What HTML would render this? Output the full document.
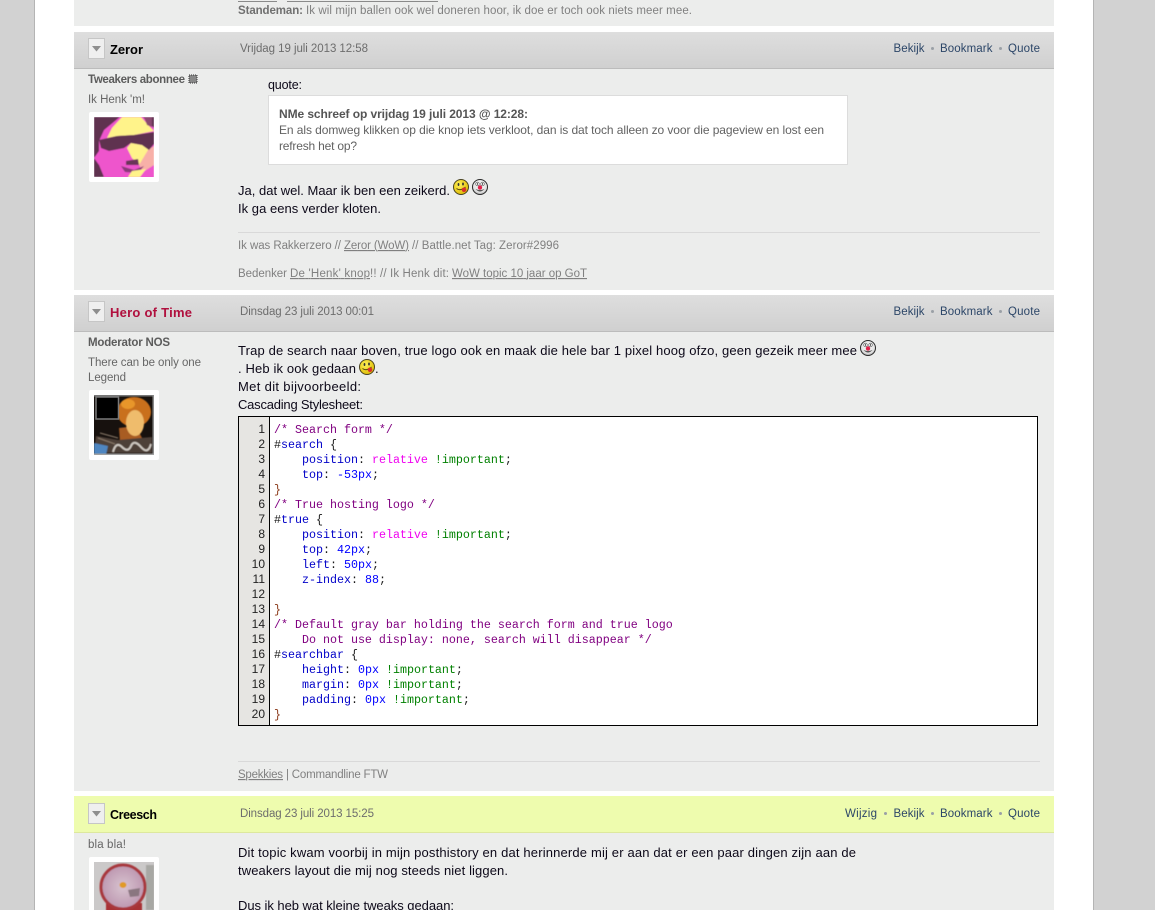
<!DOCTYPE html>
<html><head><meta charset="utf-8"><title>Forum</title>
<style>
html,body{margin:0;padding:0;width:1155px;height:910px;overflow:hidden;background:#d2d2d2}
svg{display:block;font-family:"Liberation Sans",sans-serif}
.b{font-size:13px;fill:#0c0818}
.g{font-size:11.5px;fill:#808080}
.m{font-size:11.5px;fill:#666}
.mb{font-size:11.5px;fill:#5c5c5c;font-weight:bold}
.d{font-size:11.5px;fill:#6d6d6d}
.l{font-size:11.5px;fill:#2c4668}
.n{font-size:13px;font-weight:bold;fill:#000}
.q{font-size:12px;fill:#626262}
.c{font-family:"Liberation Mono",monospace;font-size:11.67px;fill:#1a1a1a;white-space:pre}
.ln{font-size:12px;fill:#222;text-anchor:end}
.cm{fill:#800080}.p{fill:#0000c8}.v{fill:#f000f0}.i{fill:#008000}.u{fill:#0000ff}.k{fill:#8b3a1a}
</style></head><body>
<svg width="1155" height="910" viewBox="0 0 1155 910" xmlns="http://www.w3.org/2000/svg">
<defs>
<linearGradient id="h" x1="0" y1="0" x2="0" y2="1"><stop offset="0" stop-color="#dedede"/><stop offset="1" stop-color="#d0d0d0"/></linearGradient>
<radialGradient id="sy" cx=".4" cy=".35" r=".7"><stop offset="0" stop-color="#fff25a"/><stop offset="1" stop-color="#dcb800"/></radialGradient>
<radialGradient id="sc" cx=".5" cy=".4" r=".65"><stop offset="0" stop-color="#fff"/><stop offset=".7" stop-color="#e0e0e0"/><stop offset="1" stop-color="#8a8a8a"/></radialGradient>
<radialGradient id="cr" cx=".5" cy=".5" r=".5"><stop offset="0" stop-color="#d8c4d0"/><stop offset="1" stop-color="#bd97b0"/></radialGradient>
<filter id="bl" x="-5%" y="-5%" width="110%" height="110%"><feGaussianBlur stdDeviation=".5"/></filter>
<clipPath id="c1"><rect x="94" y="117" width="60" height="60"/></clipPath>
<clipPath id="c2"><rect x="94" y="395" width="60" height="60"/></clipPath>
<clipPath id="c3"><rect x="94" y="862" width="60" height="48"/></clipPath>
<g id="yel"><circle cx="8" cy="8" r="7.500" fill="url(#sy)" stroke="#4a4420"/><ellipse cx="5.500" cy="5.500" rx=".9" ry="1.500" fill="#333"/><ellipse cx="10" cy="5" rx=".9" ry="1.500" fill="#333"/><path d="M3.500 9.500Q7.500 12.500 12.500 8" fill="none" stroke="#5a4a10"/><circle cx="11" cy="10.800" r="2.300" fill="#d8322c"/></g>
<g id="clo"><circle cx="8" cy="8" r="7.500" fill="url(#sc)" stroke="#2a2a2a"/><path d="M3.500 10Q8 15 12.500 10Q8 12 3.500 10Z" fill="#555"/><circle cx="5.500" cy="5" r="1.800" fill="#fff" stroke="#555" stroke-width=".6"/><circle cx="10.500" cy="5" r="1.800" fill="#fff" stroke="#555" stroke-width=".6"/><circle cx="5.500" cy="5" r=".7" fill="#222"/><circle cx="10.500" cy="5" r=".7" fill="#222"/><circle cx="8" cy="8.500" r="2.200" fill="#e0204a"/></g>
<g id="tog"><rect x=".5" y=".5" width="16" height="20" fill="#efefef" stroke="#c6c6c6"/><path d="M4 8H13L8.500 13.500Z" fill="#8e8e8e"/></g>
</defs>

<rect width="1155" height="910" fill="#d2d2d2"/>
<rect x="34" width="1060" height="910" fill="#b4b4b4"/>
<rect x="35" width="1058" height="910" fill="#fff"/>

<!-- post 0 remainder -->
<rect x="74" y="0" width="980" height="26" fill="#ecedec"/>
<path d="M238 1.500H277M287 1.500H438" stroke="#8a8a8a"/>
<text x="238" y="14" class="g" style="font-weight:bold;fill:#707070" textLength="65">Standeman:</text>
<text x="306" y="14" class="g" textLength="386">Ik wil mijn ballen ook wel doneren hoor, ik doe er toch ook niets meer mee.</text>

<!-- Zeror -->
<rect x="74" y="32" width="980" height="36" fill="url(#h)"/>
<rect x="74" y="68" width="980" height="1" fill="#bcbcbc"/>
<rect x="74" y="69" width="980" height="221" fill="#ecedec"/>
<use href="#tog" x="88" y="38"/>
<text x="110" y="54" class="n" textLength="33">Zeror</text>
<text x="240" y="52" class="d" textLength="128">Vrijdag 19 juli 2013 12:58</text>
<text x="893.500" y="52" class="l" textLength="31">Bekijk</text>
<circle cx="932.500" cy="48.500" r="1.500" fill="#9aa0a6"/>
<text x="940" y="52" class="l" textLength="52.500">Bookmark</text>
<circle cx="1000.500" cy="48.500" r="1.500" fill="#9aa0a6"/>
<text x="1008" y="52" class="l" textLength="32">Quote</text>

<text x="88" y="83" class="mb" textLength="97">Tweakers abonnee</text>
<rect x="189" y="75" width="8" height="8" fill="#888" stroke="#333" stroke-width="1" stroke-dasharray="1 1"/>
<text x="88" y="103" class="m" textLength="57">Ik Henk 'm!</text>
<rect x="89" y="112" width="70" height="70" rx="2" fill="#fff"/>
<g clip-path="url(#c1)"><g filter="url(#bl)">
<rect x="94" y="117" width="60" height="60" fill="#5e3350"/>
<path d="M99 141L104 130 121 116 142 116 154 128V178H104L99 165 94 158 99 151Z" fill="#ee55cc"/>
<path d="M107 138L112 128 122 117 141 117 149 126 154 131 134 135 117 136Z" fill="#fff38a"/>
<path d="M144 117H152V127L147 125Z" fill="#8a4a70"/>
<path d="M131 143L142 145 149 150 144 161 139 165 132 158 127 148Z" fill="#fff38a"/>
<path d="M148 150L154 146V165L143 172 139 165Z" fill="#f8b0a8"/>
<path d="M99 140L117 136 134 135 154 132V144L149 150 142 145 131 143 124 148 109 151 101 148Z" fill="#5e3350"/>
<path d="M126 161L138 159 139 165 126 165Z" fill="#6a3558"/>
<path d="M121 166L134 170 144 166 138 173 125 172Z" fill="#8a3a78"/>
<path d="M132 171L146 169 140 177H128Z" fill="#fff38a"/>
<path d="M94 160L99 165 104 177H94Z" fill="#5e3350"/>
</g></g>

<text x="268" y="89" class="b" style="font-size:12.5px" textLength="34">quote:</text>
<rect x="268.500" y="95.500" width="579" height="69" fill="#fff" stroke="#dcdcdc"/>
<text x="279" y="118" class="q" style="font-weight:bold;fill:#555" textLength="249">NMe schreef op vrijdag 19 juli 2013 @ 12:28:</text>
<text x="279" y="134" class="q" textLength="545">En als domweg klikken op die knop iets verkloot, dan is dat toch alleen zo voor die pageview en lost een</text>
<text x="279" y="150" class="q" textLength="78">refresh het op?</text>
<text x="238" y="195" class="b" textLength="212">Ja, dat wel. Maar ik ben een zeikerd.</text>
<use href="#yel" x="453" y="179"/>
<use href="#clo" x="472" y="179"/>
<text x="238" y="213" class="b" textLength="143">Ik ga eens verder kloten.</text>
<rect x="238" y="232" width="802" height="1" fill="#d9d9d9"/>
<text x="238" y="249" class="g" textLength="103">Ik was Rakkerzero //</text>
<text x="344" y="249" class="g" text-decoration="underline" textLength="65">Zeror (WoW)</text>
<text x="412" y="249" class="g" textLength="147">// Battle.net Tag: Zeror#2996</text>
<text x="238" y="277" class="g" textLength="49">Bedenker</text>
<text x="290" y="277" class="g" text-decoration="underline" textLength="80">De 'Henk' knop</text>
<text x="370" y="277" class="g" textLength="79">!! // Ik Henk dit:</text>
<text x="452" y="277" class="g" text-decoration="underline" textLength="135">WoW topic 10 jaar op GoT</text>

<!-- Hero of Time -->
<rect x="74" y="295" width="980" height="36" fill="url(#h)"/>
<rect x="74" y="331" width="980" height="1" fill="#bcbcbc"/>
<rect x="74" y="332" width="980" height="459" fill="#ecedec"/>
<use href="#tog" x="88" y="301"/>
<text x="110" y="317" class="n" style="fill:#b0103e" textLength="82">Hero of Time</text>
<text x="240" y="315" class="d" textLength="134">Dinsdag 23 juli 2013 00:01</text>
<text x="893.500" y="315" class="l" textLength="31">Bekijk</text>
<circle cx="932.500" cy="311.500" r="1.500" fill="#9aa0a6"/>
<text x="940" y="315" class="l" textLength="52.500">Bookmark</text>
<circle cx="1000.500" cy="311.500" r="1.500" fill="#9aa0a6"/>
<text x="1008" y="315" class="l" textLength="32">Quote</text>

<text x="88" y="346" class="mb" textLength="82">Moderator NOS</text>
<text x="88" y="366" class="m" textLength="113">There can be only one</text>
<text x="88" y="381" class="m" textLength="38">Legend</text>
<rect x="89" y="390" width="70" height="70" rx="2" fill="#fff"/>
<g clip-path="url(#c2)">
<rect x="94" y="395" width="60" height="60" fill="#17110e"/>
<g filter="url(#bl)">
<ellipse cx="134" cy="412" rx="17" ry="15" fill="#c9701c"/>
<ellipse cx="128" cy="404" rx="7" ry="5" fill="#e8962c"/>
<path d="M119 428L136 426 142 438 120 442Z" fill="#a85c24"/>
<ellipse cx="135" cy="423" rx="9" ry="13" fill="#efbc6c"/>
<path d="M96 436L118 440 152 437V453H94Z" fill="#4e4038"/>
<path d="M94 443L108 446 106 455H94Z" fill="#4f86c0"/>
<path d="M100 433L118 438M98 438L115 444" stroke="#8a7a6a"/>
<path d="M113 452Q116 441 122 447T131 446 141 447 151 444" stroke="#cfc9c2" stroke-width="2" fill="none"/>
</g>
<rect x="94" y="395" width="60" height="1.500" fill="#777"/>
<rect x="152.500" y="395" width="1.500" height="60" fill="#8a8a8a"/>
<rect x="94" y="453.500" width="60" height="1.500" fill="#a0a0a0"/>
<rect x="96" y="397" width="22.500" height="22" fill="#000" stroke="#7a7a7a" stroke-width="1.500"/>
</g>

<text x="238" y="355" class="b" textLength="619">Trap de search naar boven, true logo ook en maak die hele bar 1 pixel hoog ofzo, geen gezeik meer mee</text>
<use href="#clo" x="860" y="340"/>
<text x="238" y="373" class="b" textLength="118">. Heb ik ook gedaan</text>
<use href="#yel" x="359" y="359"/>
<text x="375" y="373" class="b">.</text>
<text x="238" y="391" class="b" textLength="123">Met dit bijvoorbeeld:</text>
<text x="238" y="409" class="b" textLength="125">Cascading Stylesheet:</text>

<rect x="238.500" y="416.500" width="799" height="309" fill="#fff" stroke="#000"/>
<rect x="239" y="417" width="30" height="308" fill="#e6e5e2"/>
<rect x="269" y="417" width="1" height="308" fill="#000"/>
<g class="ln">
<text class="ln" x="265" y="433">1</text><text class="ln" x="265" y="448">2</text><text class="ln" x="265" y="463">3</text><text class="ln" x="265" y="478">4</text><text class="ln" x="265" y="493">5</text><text class="ln" x="265" y="508">6</text><text class="ln" x="265" y="523">7</text><text class="ln" x="265" y="538">8</text><text class="ln" x="265" y="553">9</text><text class="ln" x="265" y="568">10</text><text class="ln" x="265" y="583">11</text><text class="ln" x="265" y="598">12</text><text class="ln" x="265" y="613">13</text><text class="ln" x="265" y="628">14</text><text class="ln" x="265" y="643">15</text><text class="ln" x="265" y="658">16</text><text class="ln" x="265" y="673">17</text><text class="ln" x="265" y="688">18</text><text class="ln" x="265" y="703">19</text><text class="ln" x="265" y="718">20</text>
</g>
<text class="c" x="274" y="433"><tspan class="cm">/* Search form */</tspan></text>
<text class="c" x="274" y="448">#<tspan class="p">search</tspan> {</text>
<text class="c" x="274" y="463">    <tspan class="p">position</tspan>: <tspan class="v">relative</tspan> <tspan class="i">!important</tspan>;</text>
<text class="c" x="274" y="478">    <tspan class="p">top</tspan>: <tspan class="u">-53px</tspan>;</text>
<text class="c" x="274" y="493"><tspan class="k">}</tspan></text>
<text class="c" x="274" y="508"><tspan class="cm">/* True hosting logo */</tspan></text>
<text class="c" x="274" y="523">#<tspan class="p">true</tspan> {</text>
<text class="c" x="274" y="538">    <tspan class="p">position</tspan>: <tspan class="v">relative</tspan> <tspan class="i">!important</tspan>;</text>
<text class="c" x="274" y="553">    <tspan class="p">top</tspan>: <tspan class="u">42px</tspan>;</text>
<text class="c" x="274" y="568">    <tspan class="p">left</tspan>: <tspan class="u">50px</tspan>;</text>
<text class="c" x="274" y="583">    <tspan class="p">z-index</tspan>: <tspan class="u">88</tspan>;</text>
<text class="c" x="274" y="613"><tspan class="k">}</tspan></text>
<text class="c" x="274" y="628"><tspan class="cm">/* Default gray bar holding the search form and true logo</tspan></text>
<text class="c" x="274" y="643"><tspan class="cm">    Do not use display: none, search will disappear */</tspan></text>
<text class="c" x="274" y="658">#<tspan class="p">searchbar</tspan> {</text>
<text class="c" x="274" y="673">    <tspan class="p">height</tspan>: <tspan class="u">0px</tspan> <tspan class="i">!important</tspan>;</text>
<text class="c" x="274" y="688">    <tspan class="p">margin</tspan>: <tspan class="u">0px</tspan> <tspan class="i">!important</tspan>;</text>
<text class="c" x="274" y="703">    <tspan class="p">padding</tspan>: <tspan class="u">0px</tspan> <tspan class="i">!important</tspan>;</text>
<text class="c" x="274" y="718"><tspan class="k">}</tspan></text>

<rect x="238" y="761" width="802" height="1" fill="#d9d9d9"/>
<text x="238" y="778" class="g" text-decoration="underline" textLength="45">Spekkies</text>
<text x="286" y="778" class="g" textLength="102">| Commandline FTW</text>

<!-- Creesch -->
<rect x="74" y="796" width="980" height="36" fill="#eefcae"/>
<rect x="74" y="832" width="980" height="1" fill="#dde89e"/>
<rect x="74" y="833" width="980" height="77" fill="#ecedec"/>
<use href="#tog" x="88" y="803"/>
<text x="110" y="819" class="n" style="font-size:12.500px" textLength="47">Creesch</text>
<text x="240" y="817" class="d" textLength="134">Dinsdag 23 juli 2013 15:25</text>
<text x="845" y="817" class="l" textLength="32">Wijzig</text>
<circle cx="885.500" cy="813.500" r="1.500" fill="#9aa0a6"/>
<text x="893.500" y="817" class="l" textLength="31">Bekijk</text>
<circle cx="932.500" cy="813.500" r="1.500" fill="#9aa0a6"/>
<text x="940" y="817" class="l" textLength="52.500">Bookmark</text>
<circle cx="1000.500" cy="813.500" r="1.500" fill="#9aa0a6"/>
<text x="1008" y="817" class="l" textLength="32">Quote</text>

<text x="88" y="848" class="m" textLength="38">bla bla!</text>
<rect x="89" y="857" width="70" height="60" rx="2" fill="#fff"/>
<g clip-path="url(#c3)">
<rect x="94" y="862" width="60" height="48" fill="#cbc9c9"/>
<g filter="url(#bl)">
<rect x="146" y="865" width="8" height="45" fill="#a8a8a4"/>
<rect x="106" y="903" width="36" height="8" fill="#a83234"/>
<circle cx="123" cy="887" r="22" fill="url(#cr)" stroke="#a8383c" stroke-width="3"/>
<ellipse cx="123" cy="885" rx="3.500" ry="3" fill="#e09a28"/>
<path d="M128 890L140 888 139 896 130 897Z" fill="#8a7680"/>
</g></g>

<text x="238" y="857" class="b" textLength="618">Dit topic kwam voorbij in mijn posthistory en dat herinnerde mij er aan dat er een paar dingen zijn aan de</text>
<text x="238" y="875" class="b" textLength="270">tweakers layout die mij nog steeds niet liggen.</text>
<text x="238" y="910" class="b" textLength="216">Dus ik heb wat kleine tweaks gedaan:</text>
</svg>
</body></html>
